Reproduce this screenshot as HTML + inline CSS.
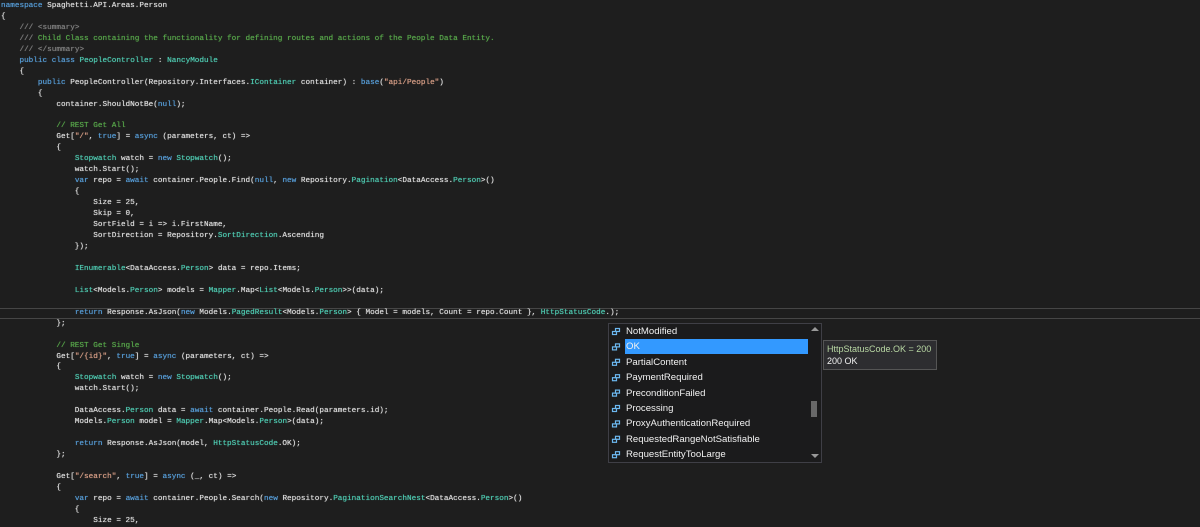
<!DOCTYPE html>
<html><head><style>
body{margin:0;background:#1e1e1e;width:1200px;height:524px;overflow:hidden;position:relative}
pre{margin:0;position:absolute;left:1px;top:1px;font-family:"Liberation Mono",monospace;font-size:7.7px;line-height:10.96px;color:#dcdcdc;white-space:pre;text-shadow:0 0 0.6px currentColor}
.k{color:#569cd6}.t{color:#4ec9b0}.c{color:#57a64a}.s{color:#d69d85}.g{color:#808080}
.cur{position:absolute;left:0;top:308px;width:1200px;height:11px;border-top:1px solid #464646;border-bottom:1px solid #464646;box-sizing:border-box}
.dd{position:absolute;left:608px;top:323px;width:214px;height:140px;background:#1b1b1c;border:1px solid #3f3f46;box-sizing:border-box}
.row{position:absolute;left:17px;height:15px;line-height:15px;width:182px;padding-left:1px}
.sel{background:#3399ff}
.sb{position:absolute;right:0;top:0;width:13px;height:138px;background:#1b1b1c}
.tip{position:absolute;left:823px;top:340px;width:114px;height:30px;background:#2d2d30;border:1px solid #555;box-sizing:border-box;font-family:"Liberation Sans",sans-serif;font-size:9px;color:#f1f1f1;padding:2px 3px;line-height:12px;white-space:nowrap}
</style></head><body>
<div class="cur"></div>
<pre><span class="k">namespace</span> Spaghetti.API.Areas.Person
{
    <span class="g">///</span> <span class="g">&lt;summary&gt;</span>
    <span class="g">///</span><span class="c"> Child Class containing the functionality for defining routes and actions of the People Data Entity.</span>
    <span class="g">///</span> <span class="g">&lt;/summary&gt;</span>
    <span class="k">public</span> <span class="k">class</span> <span class="t">PeopleController</span> : <span class="t">NancyModule</span>
    {
        <span class="k">public</span> PeopleController(Repository.Interfaces.<span class="t">IContainer</span> container) : <span class="k">base</span>(<span class="s">"api/People"</span>)
        {
            container.ShouldNotBe(<span class="k">null</span>);

            <span class="c">// REST Get All</span>
            Get[<span class="s">"/"</span>, <span class="k">true</span>] = <span class="k">async</span> (parameters, ct) =&gt;
            {
                <span class="t">Stopwatch</span> watch = <span class="k">new</span> <span class="t">Stopwatch</span>();
                watch.Start();
                <span class="k">var</span> repo = <span class="k">await</span> container.People.Find(<span class="k">null</span>, <span class="k">new</span> Repository.<span class="t">Pagination</span>&lt;DataAccess.<span class="t">Person</span>&gt;()
                {
                    Size = 25,
                    Skip = 0,
                    SortField = i =&gt; i.FirstName,
                    SortDirection = Repository.<span class="t">SortDirection</span>.Ascending
                });

                <span class="t">IEnumerable</span>&lt;DataAccess.<span class="t">Person</span>&gt; data = repo.Items;

                <span class="t">List</span>&lt;Models.<span class="t">Person</span>&gt; models = <span class="t">Mapper</span>.Map&lt;<span class="t">List</span>&lt;Models.<span class="t">Person</span>&gt;&gt;(data);

                <span class="k">return</span> Response.AsJson(<span class="k">new</span> Models.<span class="t">PagedResult</span>&lt;Models.<span class="t">Person</span>&gt; { Model = models, Count = repo.Count }, <span class="t">HttpStatusCode</span>.);
            };

            <span class="c">// REST Get Single</span>
            Get[<span class="s">"/{id}"</span>, <span class="k">true</span>] = <span class="k">async</span> (parameters, ct) =&gt;
            {
                <span class="t">Stopwatch</span> watch = <span class="k">new</span> <span class="t">Stopwatch</span>();
                watch.Start();

                DataAccess.<span class="t">Person</span> data = <span class="k">await</span> container.People.Read(parameters.id);
                Models.<span class="t">Person</span> model = <span class="t">Mapper</span>.Map&lt;Models.<span class="t">Person</span>&gt;(data);

                <span class="k">return</span> Response.AsJson(model, <span class="t">HttpStatusCode</span>.OK);
            };

            Get[<span class="s">"/search"</span>, <span class="k">true</span>] = <span class="k">async</span> (_, ct) =&gt;
            {
                <span class="k">var</span> repo = <span class="k">await</span> container.People.Search(<span class="k">new</span> Repository.<span class="t">PaginationSearchNest</span>&lt;DataAccess.<span class="t">Person</span>&gt;()
                {
                    Size = 25,
</pre>
<div class="dd">
<div class="sb"><div style="position:absolute;left:3px;top:3px;width:0;height:0;border-left:4px solid transparent;border-right:4px solid transparent;border-bottom:4px solid #999"></div><div style="position:absolute;left:3px;top:77px;width:6px;height:16px;background:#686868"></div><div style="position:absolute;left:3px;top:130px;width:0;height:0;border-left:4px solid transparent;border-right:4px solid transparent;border-top:4px solid #999"></div></div>
</div>
<div style="position:absolute;left:608px;top:323px;width:200px;height:140px;font-family:'Liberation Sans',sans-serif;font-size:9.6px;color:#f1f1f1">
<svg style="position:absolute;left:0;top:0" width="17" height="140">
<g fill="none" stroke="#6cb8f0" stroke-width="1.2">
<g transform="translate(0,4)"><rect x="4.5" y="4.5" width="4" height="3"/><rect x="7.5" y="1.5" width="4" height="3"/></g>
<g transform="translate(0,19.4)"><rect x="4.5" y="4.5" width="4" height="3"/><rect x="7.5" y="1.5" width="4" height="3"/></g>
<g transform="translate(0,34.8)"><rect x="4.5" y="4.5" width="4" height="3"/><rect x="7.5" y="1.5" width="4" height="3"/></g>
<g transform="translate(0,50.2)"><rect x="4.5" y="4.5" width="4" height="3"/><rect x="7.5" y="1.5" width="4" height="3"/></g>
<g transform="translate(0,65.6)"><rect x="4.5" y="4.5" width="4" height="3"/><rect x="7.5" y="1.5" width="4" height="3"/></g>
<g transform="translate(0,81)"><rect x="4.5" y="4.5" width="4" height="3"/><rect x="7.5" y="1.5" width="4" height="3"/></g>
<g transform="translate(0,96.4)"><rect x="4.5" y="4.5" width="4" height="3"/><rect x="7.5" y="1.5" width="4" height="3"/></g>
<g transform="translate(0,111.8)"><rect x="4.5" y="4.5" width="4" height="3"/><rect x="7.5" y="1.5" width="4" height="3"/></g>
<g transform="translate(0,127.2)"><rect x="4.5" y="4.5" width="4" height="3"/><rect x="7.5" y="1.5" width="4" height="3"/></g>
</g></svg>
<div class="row" style="top:1px">NotModified</div>
<div class="row sel" style="top:16.4px">OK</div>
<div class="row" style="top:31.8px">PartialContent</div>
<div class="row" style="top:47.2px">PaymentRequired</div>
<div class="row" style="top:62.6px">PreconditionFailed</div>
<div class="row" style="top:78px">Processing</div>
<div class="row" style="top:93.4px">ProxyAuthenticationRequired</div>
<div class="row" style="top:108.8px">RequestedRangeNotSatisfiable</div>
<div class="row" style="top:124.2px">RequestEntityTooLarge</div>
</div>
<div class="tip"><span style="color:#b8d7a3">HttpStatusCode.OK = 200</span><br>200 OK</div>
</body></html>
